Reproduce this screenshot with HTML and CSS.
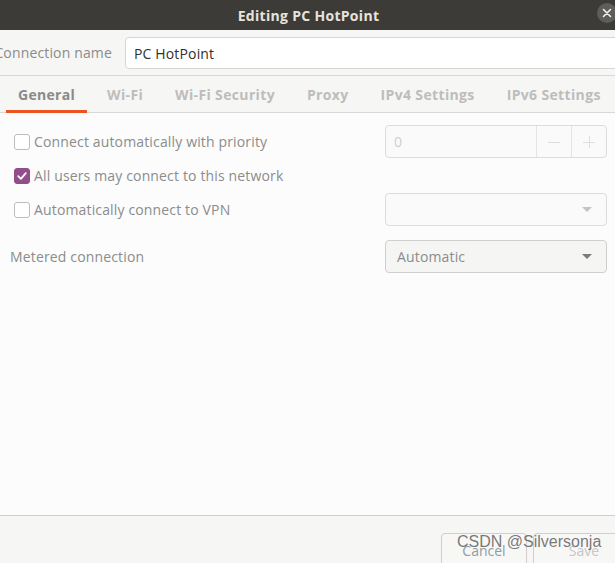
FILE: index.html
```html
<!DOCTYPE html>
<html>
<head>
<meta charset="utf-8">
<link rel="stylesheet" href="styles.css">
</head>
<body>
<div class="window">
  <header class="titlebar">
    <span class="title">Editing PC HotPoint</span>
    <span class="close">
      <svg width="10" height="10" viewBox="0 0 10 10"><path d="M1.5 1.5 L8.5 8.5 M8.5 1.5 L1.5 8.5" stroke="#f2f2f2" stroke-width="1.6" stroke-linecap="round"/></svg>
    </span>
  </header>
  <div class="namerow">
    <label class="namelabel">Connection name</label>
    <div class="entry">PC HotPoint</div>
  </div>
  <nav class="tabs">
    <span class="tab active">General</span>
    <span class="tab">Wi-Fi</span>
    <span class="tab">Wi-Fi Security</span>
    <span class="tab">Proxy</span>
    <span class="tab">IPv4 Settings</span>
    <span class="tab">IPv6 Settings</span>
  </nav>
  <main class="content">
    <div class="row">
      <label class="check"><span class="box"></span>Connect automatically with priority</label>
      <div class="spin">
        <span class="spin-value">0</span>
        <span class="spin-btn">
          <svg width="12" height="12" viewBox="0 0 12 12"><path d="M0 6.5 H12" stroke="#dedede" stroke-width="1"/></svg>
        </span>
        <span class="spin-btn">
          <svg width="12" height="12" viewBox="0 0 12 12"><path d="M0 6.5 H12 M6.5 0 V12" stroke="#dedede" stroke-width="1"/></svg>
        </span>
      </div>
    </div>
    <div class="row">
      <label class="check"><span class="box checked">
        <svg width="12" height="12" viewBox="0 0 12 12"><path d="M2.2 6.2 L4.9 8.9 L9.8 3.2" fill="none" stroke="#ffffff" stroke-width="1.8" stroke-linecap="round" stroke-linejoin="round"/></svg>
      </span>All users may connect to this network</label>
    </div>
    <div class="row">
      <label class="check"><span class="box"></span>Automatically connect to VPN</label>
      <div class="combo disabled">
        <span class="combo-text"></span>
        <span class="arrow light"></span>
      </div>
    </div>
    <div class="row metered">
      <span class="plain">Metered connection</span>
      <div class="combo">
        <span class="combo-text">Automatic</span>
        <span class="arrow"></span>
      </div>
    </div>
  </main>
  <footer class="actions">
    <button class="btn cancel">Cancel</button>
    <button class="btn save">Save</button>
  </footer>
  <div class="watermark">CSDN @Silversonja</div>
</div>
</body>
</html>
```

FILE: styles.css
```css
html, body {
  margin: 0;
  padding: 0;
  height: 100%;
  overflow: hidden;
  background: #fcfcfc;
}

.window {
  position: relative;
  width: 615px;
  height: 563px;
  display: flex;
  flex-direction: column;
  font-family: "Open Sans", "Noto Sans", sans-serif;
  font-size: 14px;
  letter-spacing: 0.15px;
  color: #888a8b;
  overflow: hidden;
}

.titlebar {
  position: relative;
  height: 30px;
  flex: none;
  background: #3d3b37;
  display: flex;
  align-items: center;
  justify-content: center;
}

.title {
  color: #e6e3de;
  font-weight: 700;
  font-size: 14px;
  letter-spacing: 0.3px;
  margin-left: 2px;
}

.close {
  position: absolute;
  left: 597px;
  top: 3px;
  width: 20px;
  height: 20px;
  border-radius: 50%;
  background: #5e5d5a;
  display: flex;
  align-items: center;
  justify-content: center;
}

.namerow {
  flex: none;
  height: 46px;
  background: #f6f6f5;
  border-bottom: 1px solid #d8d8d6;
  display: flex;
  align-items: center;
  gap: 13px;
  box-sizing: border-box;
}

.namelabel {
  width: 112px;
  flex: none;
  display: flex;
  justify-content: flex-end;
  white-space: nowrap;
  color: #8b8b8b;
}

.entry {
  flex: 1;
  height: 32px;
  margin-right: -10px;
  box-sizing: border-box;
  border: 1px solid #d6d6d4;
  border-radius: 4px;
  background: #ffffff;
  display: flex;
  align-items: center;
  padding-left: 8px;
  color: #303030;
  margin-top: 1px;
}

.tabs {
  flex: none;
  height: 37px;
  box-sizing: border-box;
  background: #f6f6f5;
  border-bottom: 1px solid #d8d8d6;
  display: flex;
  padding-left: 6px;
  gap: 8px;
}

.tab {
  padding: 0 12px;
  display: flex;
  align-items: center;
  font-weight: 700;
  letter-spacing: 0.35px;
  color: #bdbdbc;
  white-space: nowrap;
  border-bottom: 3px solid transparent;
  margin-bottom: -1px;
  padding-top: 2px;
}

.tab.active {
  color: #8a8a89;
  letter-spacing: 0.3px;
  border-bottom-color: #e95420;
}

.content {
  flex: 1;
  background: #fcfcfc;
  padding: 12px 8px 0 10px;
  display: flex;
  flex-direction: column;
  gap: 1px;
}

.row {
  min-height: 33px;
  display: flex;
  align-items: center;
  justify-content: space-between;
}

.row.metered {
  margin-top: 13px;
}

.check {
  display: flex;
  align-items: center;
  gap: 4px;
  padding-left: 4px;
  color: #8a8c8d;
  white-space: nowrap;
}

.box {
  width: 16px;
  height: 16px;
  box-sizing: border-box;
  border: 1px solid #bdbdbd;
  border-radius: 3px;
  background: #ffffff;
  display: flex;
  align-items: center;
  justify-content: center;
}

.box.checked {
  background: #924d8b;
  border-color: #924d8b;
}

.plain {
  color: #8a8c8d;
}

.spin {
  width: 222px;
  height: 33px;
  box-sizing: border-box;
  border: 1px solid #dcdcdb;
  border-radius: 4px;
  background: #fafafa;
  display: flex;
}

.spin-value {
  flex: 1;
  display: flex;
  align-items: center;
  padding-left: 8px;
  color: #cfcfcf;
}

.spin-btn {
  width: 35px;
  box-sizing: border-box;
  border-left: 1px solid #e4e4e3;
  display: flex;
  align-items: center;
  justify-content: center;
}

.combo {
  width: 222px;
  height: 33px;
  box-sizing: border-box;
  border: 1px solid #cfcfce;
  border-radius: 4px;
  background: #f5f5f4;
  display: flex;
  align-items: center;
  justify-content: space-between;
  padding: 0 14px 0 11px;
}

.combo.disabled {
  border-color: #dcdcdb;
  background: #fafafa;
}

.combo-text {
  color: #8a8c8d;
}

.arrow {
  width: 0;
  height: 0;
  border-left: 5px solid transparent;
  border-right: 5px solid transparent;
  border-top: 5px solid #7b7b7b;
}

.arrow.light {
  border-top-color: #c4c4c4;
}

.actions {
  flex: none;
  height: 48px;
  box-sizing: border-box;
  background: #f6f6f5;
  border-top: 1px solid #cfcfcd;
  display: flex;
  justify-content: flex-end;
  align-items: flex-start;
  padding-top: 17px;
  gap: 6px;
  margin-right: -20px;
}

.btn {
  height: 34px;
  flex: none;
  box-sizing: border-box;
  border: 1px solid #d0cfcd;
  border-radius: 4px;
  background: #f7f7f6;
  font-family: "Open Sans", "Noto Sans", sans-serif;
  font-size: 14px;
  padding: 0;
}

.cancel {
  width: 86px;
  color: #8f9ba6;
}

.save {
  width: 102px;
  color: #c6c6c6;
}

.watermark {
  position: absolute;
  left: 457px;
  top: 533px;
  font-family: "Liberation Sans", Arial, sans-serif;
  font-size: 16px;
  letter-spacing: 0;
  color: rgba(95, 95, 95, 0.85);
  white-space: nowrap;
}
```
